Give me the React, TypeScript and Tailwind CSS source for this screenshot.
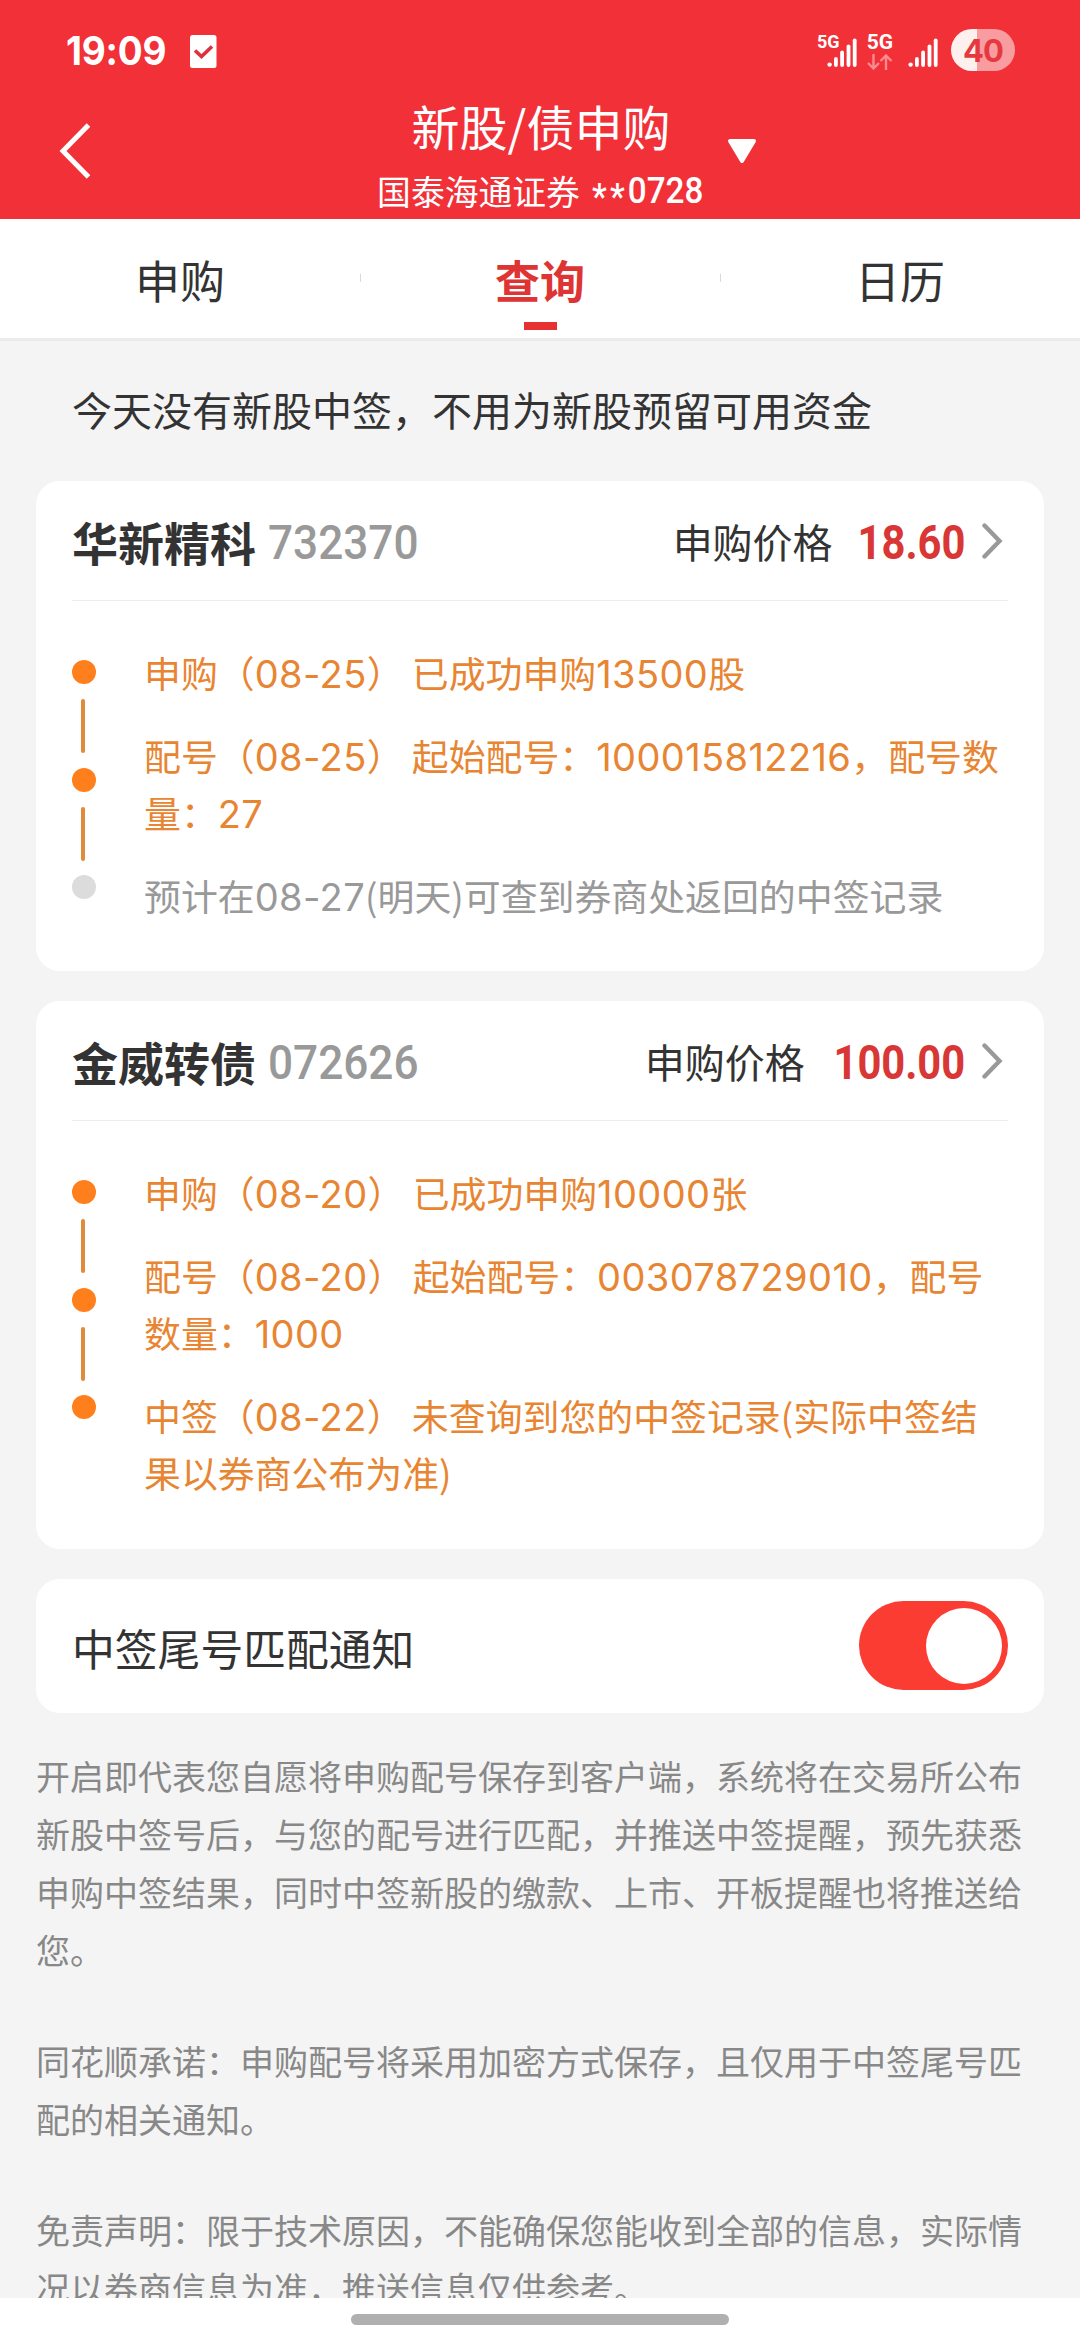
import type { ReactNode } from "react";

const latinRun = /([0-9][0-9.\-]*)/;

/** Chinese copy with its digit runs set in Inter. */
function Mixed({ children }: { children: string }) {
  return (
    <>
      {children.split(latinRun).map((part, i) =>
        i % 2 === 1 ? (
          <span key={i} className="font-[Inter] text-[38px] tracking-[0.4px]">
            {part}
          </span>
        ) : (
          part
        ),
      )}
    </>
  );
}

function SignalBars() {
  return (
    <svg width="30" height="30" viewBox="0 0 30 30" fill="#fff">
      <circle cx="2.6" cy="26.6" r="2.2" />
      <rect x="7" y="19" width="3.8" height="10" rx="1.9" />
      <rect x="13.2" y="12.6" width="3.8" height="16.4" rx="1.9" />
      <rect x="19.6" y="6.4" width="3.8" height="22.6" rx="1.9" />
      <rect x="25.8" y="0.4" width="3.8" height="28.6" rx="1.9" />
    </svg>
  );
}

function StatusBar() {
  return (
    <div className="flex h-[100px] items-start pl-[66px] pr-[65px] pt-[29px] text-white">
      <span className="mt-[1px] w-[101px] origin-left scale-x-[0.925] font-[Inter] text-[40px] leading-[42px] font-bold tracking-[-0.2px]">
        19:09
      </span>
      <svg className="mt-[6px] ml-[23px]" width="27" height="33" viewBox="0 0 27 33">
        <rect width="26.5" height="33" rx="2.5" fill="#fff" />
        <path d="M5 15.5L11.5 21.5L22 11.5" fill="none" stroke="#dc3239" strokeWidth="3.6" />
      </svg>
      <div className="ml-auto flex items-start">
        <span className="mt-[5px] -mr-[13px] font-[Roboto] text-[18px] leading-[15px] font-bold">5G</span>
        <div className="mt-[9px]">
          <SignalBars />
        </div>
        <div className="ml-[10px] flex flex-col items-center">
          <span className="mt-[5px] font-[Roboto] text-[21px] leading-[17px] font-bold">5G</span>
          <svg className="mt-[3px]" width="26" height="16" viewBox="0 0 26 16" fill="none" stroke="#fb8b8f" strokeWidth="2.4">
            <path d="M6.5 0V14.5M1 9L6.500 14.500L12 9M19 16V1.500M13.500 7L19 1.500L24.500 7" />
          </svg>
        </div>
        <div className="mt-[9px] ml-[15px]">
          <SignalBars />
        </div>
        <div className="ml-[13px] flex h-[42px] w-[64px] items-center justify-center rounded-full bg-linear-to-r from-[#fff0f0] from-[40%] to-[#f99ca0] to-[40%] font-[Inter] text-[31px] leading-none font-bold tracking-[-1px] text-[#e5383f]">
          40
        </div>
      </div>
    </div>
  );
}

function TitleBar() {
  return (
    <div className="flex h-[119px] text-white">
      <svg className="mt-[22px] ml-[59px] shrink-0" width="32" height="58" viewBox="0 0 32 58">
        <path d="M29.500 3L4 29L29.500 55" fill="none" stroke="#fff" strokeWidth="5" />
      </svg>
      <div className="ml-[286px] flex w-[328px] flex-col items-center">
        <h1 className="h-[66px] text-[48px] leading-[51px] whitespace-nowrap">新股/债申购</h1>
        <div className="flex h-[50px] items-center text-[33.8px] leading-[50px] whitespace-nowrap">
          国泰海通证券
          <span className="ml-[12px] flex w-[113px] origin-left scale-x-[0.91] items-center font-[Roboto] text-[36.500px] font-medium">
            <span className="pt-[12px] tracking-[3.500px]">**</span>0728
          </span>
        </div>
      </div>
      <svg className="mt-[38px] ml-[22px]" width="30" height="26" viewBox="0 0 30 26">
        <path d="M3 3H27L15 23Z" fill="#fff" stroke="#fff" strokeWidth="4" strokeLinejoin="round" />
      </svg>
    </div>
  );
}

function Tabs() {
  return (
    <nav className="flex h-[122px] items-start border-b-[3px] border-[#ebebeb] bg-white text-[45px] leading-[121px] text-[#333]">
      <span className="h-full flex-1 text-center">申购</span>
      <i className="mt-[55px] -mr-px h-[8px] w-px bg-[#d8d8d8]" />
      <div className="flex h-full flex-1 flex-col items-center">
        <span className="h-[103px] font-bold text-[#de3434]">查询</span>
        <i className="h-[8px] w-[33px] bg-[#e63031]" />
      </div>
      <i className="mt-[55px] -mr-px h-[8px] w-px bg-[#d8d8d8]" />
      <span className="h-full flex-1 text-center">日历</span>
    </nav>
  );
}

type Step = { lines: string[]; done: boolean };

function StockCard({ name, code, price, steps }: { name: string; code: string; price: string; steps: Step[] }) {
  return (
    <section className="rounded-[24px] bg-white px-[36px] pb-[47px]">
      <header className="flex h-[120px] items-center border-b border-[#ececec] text-[40px] text-[#333]">
        <h2 className="text-[46px] leading-[60px] font-bold">{name}</h2>
        <span className="ml-[12px] w-[150px] origin-left scale-x-[0.91] pt-[4px] font-[Roboto] text-[48.500px] leading-[60px] font-medium text-[#999]">
          {code}
        </span>
        <span className="ml-auto">申购价格</span>
        <span className="ml-[7px] flex origin-right scale-x-[0.86] pt-[4px] font-[Roboto] text-[48.500px] leading-[60px] font-bold text-[#d93636]">
          {price}
        </span>
        <svg className="mr-[5px] ml-[17px]" width="21" height="36" viewBox="0 0 21 36">
          <path d="M2.500 2.500L17.500 18L2.500 33.500" fill="none" stroke="#999" strokeWidth="4.400" strokeLinecap="round" />
        </svg>
      </header>
      <div className="flex pt-[43px]">
        <div className="flex w-[72px] flex-col pt-[16px]">
          {steps.map((step, i) => (
            <div key={i}>
              {i > 0 && <i className="mt-[15px] mb-[14.500px] ml-[9px] block h-[54px] w-[4px] rounded-full bg-[#e08a3c]" />}
              {step.done ? (
                <i className="block size-[24px] rounded-full bg-[#ff7f1c]" />
              ) : (
                <i className="block size-[24px] rounded-full bg-[#dcdcdc]" />
              )}
            </div>
          ))}
        </div>
        <div className="flex flex-col gap-[25px] text-[36.900px] leading-[57.500px] whitespace-nowrap">
          {steps.map((step, i) => (
            <div key={i} className={step.done ? "text-[#e88532]" : "text-[#999]"}>
              {step.lines.map((line) => (
                <p key={line} className="h-[57.500px]">
                  <Mixed>{line}</Mixed>
                </p>
              ))}
            </div>
          ))}
        </div>
      </div>
    </section>
  );
}

function Paragraph({ children }: { children: ReactNode }) {
  return <p className="text-[34px] leading-[58px] whitespace-pre text-[#888]">{children}</p>;
}

export default function App() {
  return (
    <div className="flex h-[2340px] w-[1080px] flex-col overflow-hidden bg-[#f4f4f4] font-['Noto_Sans_CJK_SC',sans-serif]">
      <div className="h-[219px] shrink-0 bg-[#f23038]">
        <StatusBar />
        <TitleBar />
      </div>
      <Tabs />
      <main className="min-h-0 flex-1 overflow-hidden px-[36px]">
        <p className="h-[140px] pl-[36px] text-[40px] leading-[136px] text-[#333]">
          今天没有新股中签，不用为新股预留可用资金
        </p>
        <div className="flex flex-col gap-[30px]">
          <StockCard
            name="华新精科"
            code="732370"
            price="18.60"
            steps={[
              { done: true, lines: ["申购（08-25） 已成功申购13500股"] },
              { done: true, lines: ["配号（08-25） 起始配号：100015812216，配号数", "量：27"] },
              { done: false, lines: ["预计在08-27(明天)可查到券商处返回的中签记录"] },
            ]}
          />
          <StockCard
            name="金威转债"
            code="072626"
            price="100.00"
            steps={[
              { done: true, lines: ["申购（08-20） 已成功申购10000张"] },
              { done: true, lines: ["配号（08-20） 起始配号：003078729010，配号", "数量：1000"] },
              { done: true, lines: ["中签（08-22） 未查询到您的中签记录(实际中签结", "果以券商公布为准)"] },
            ]}
          />
          <section className="flex h-[134px] items-center justify-between rounded-[24px] bg-white px-[36px]">
            <span className="pt-[4px] text-[42.800px] text-[#333]">中签尾号匹配通知</span>
            <div className="flex h-[89px] w-[149px] items-center justify-end rounded-full bg-[#fb3c32] pr-[6px]">
              <i className="size-[76px] rounded-full bg-white" />
            </div>
          </section>
        </div>
        <div className="mt-[34px] flex flex-col gap-[53px]">
          <Paragraph>
            {"开启即代表您自愿将申购配号保存到客户端，系统将在交易所公布\n新股中签号后，与您的配号进行匹配，并推送中签提醒，预先获悉\n申购中签结果，同时中签新股的缴款、上市、开板提醒也将推送给\n您。"}
          </Paragraph>
          <Paragraph>{"同花顺承诺：申购配号将采用加密方式保存，且仅用于中签尾号匹\n配的相关通知。"}</Paragraph>
          <Paragraph>
            {"免责声明：限于技术原因，不能确保您能收到全部的信息，实际情\n况以券商信息为准，推送信息仅供参考。"}
          </Paragraph>
        </div>
      </main>
      <footer className="flex h-[42px] shrink-0 justify-center bg-white pt-[16px]">
        <i className="h-[11px] w-[378px] rounded-full bg-[#b0b0b0]" />
      </footer>
    </div>
  );
}
